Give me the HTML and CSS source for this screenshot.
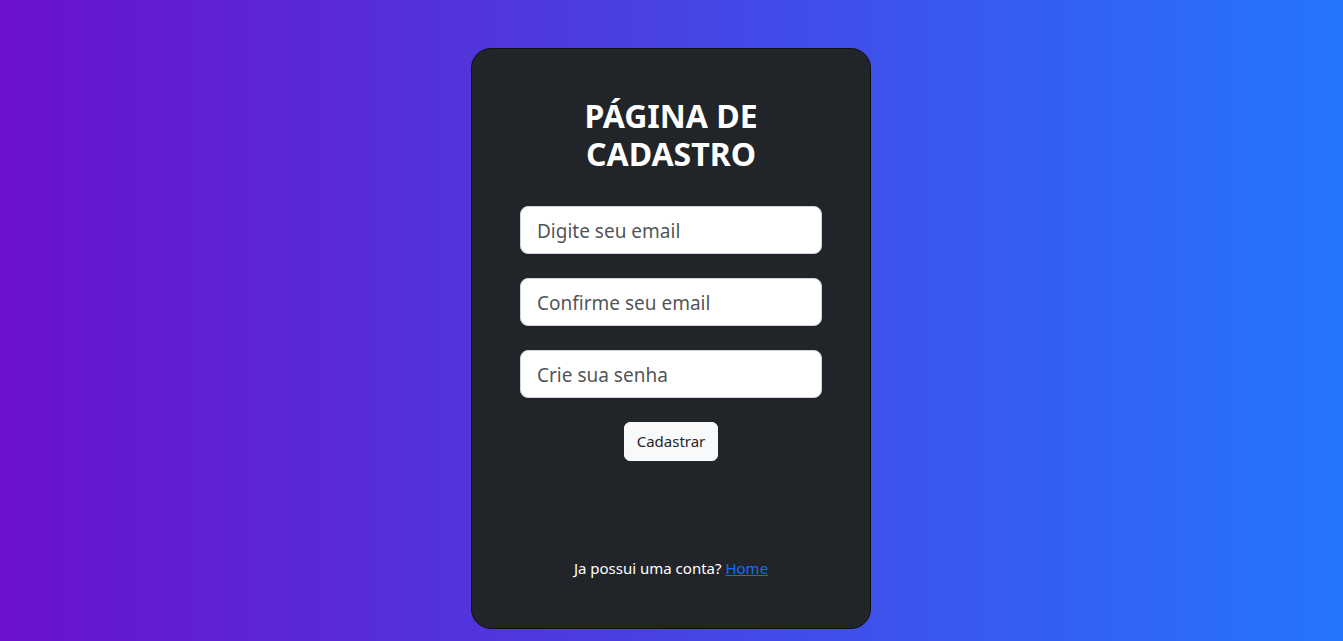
FILE: index.html
```html
<!DOCTYPE html>
<html lang="pt-BR">
<head>
<meta charset="utf-8">
<title>Cadastro</title>
<link rel="stylesheet" href="styles.css">
</head>
<body>
<main class="page">
  <section class="card">
    <h2 class="title">PÁGINA DE CADASTRO</h2>
    <form class="form">
      <input class="field" type="email" placeholder="Digite seu email">
      <input class="field" type="email" placeholder="Confirme seu email">
      <input class="field" type="password" placeholder="Crie sua senha">
      <button class="btn" type="button">Cadastrar</button>
    </form>
    <p class="footer">Ja possui uma conta? <a class="link" href="#">Home</a></p>
  </section>
</main>
</body>
</html>
```

FILE: styles.css
```css
* { box-sizing: border-box; }
html, body { margin: 0; height: 100%; }
body {
  font-family: "Noto Sans", "Open Sans", sans-serif;
  background: linear-gradient(to right, #6a11cb, #2575fc);
  color: #fff;
  font-size: 16px;
  line-height: 1.5;
}
.page {
  display: flex;
  justify-content: center;
  padding: 48px 1px 0 0;
}
.card {
  width: 400px;
  height: 581px;
  background: #212529;
  border: 1px solid #111;
  border-radius: 20px;
  padding: 48px 48px 49px;
  display: flex;
  flex-direction: column;
  align-items: center;
}
.title {
  margin: 0 0 32px;
  font-size: 32px;
  font-weight: 700;
  line-height: 1.2;
  text-align: center;
  width: 200px;
}
.form {
  width: 100%;
  display: flex;
  flex-direction: column;
  align-items: center;
}
.field {
  width: 100%;
  height: 48px;
  margin: 0 0 24px;
  padding: 9px 16px 7px;
  font-family: inherit;
  font-size: 19px;
  color: #212529;
  background: #fff;
  border: 1px solid #ced4da;
  border-radius: 8px;
  outline: none;
}
.field::placeholder { color: rgba(33, 37, 41, 0.8); }
.btn {
  height: 39px;
  padding: 6px 12px;
  font-family: inherit;
  font-size: 15px;
  color: #212529;
  background: #f8f9fa;
  border: 1px solid #f8f9fa;
  border-radius: 6px;
}
.footer {
  margin: auto 0 0;
  font-size: 15px;
  text-align: center;
}
.link { color: #0d6efd; }
```
